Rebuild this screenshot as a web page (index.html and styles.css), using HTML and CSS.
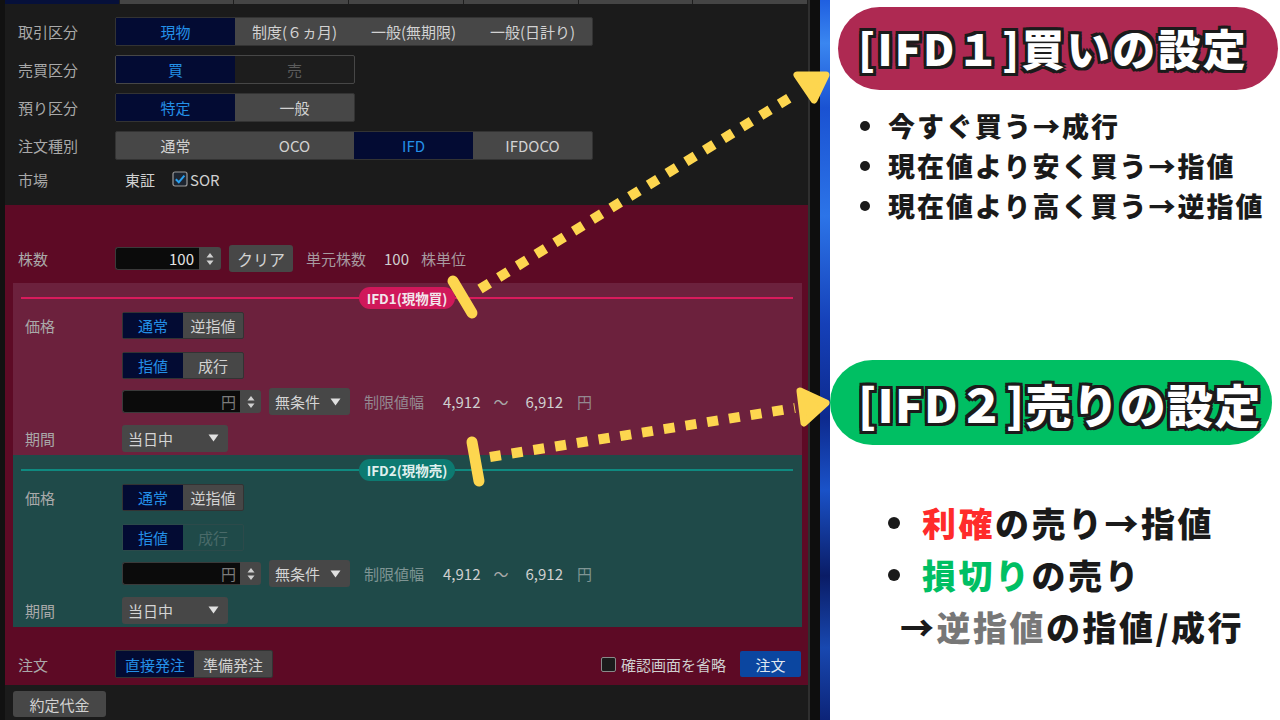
FILE: index.html
```html
<!DOCTYPE html>
<html lang="ja">
<head>
<meta charset="utf-8">
<title>IFD注文</title>
<link rel="stylesheet" href="styles.css">
</head>
<body>
<div class="screen">
  <div class="app">
    <div class="tabs">
      <span class="tab on"></span><span class="tab"></span><span class="tab"></span><span class="tab"></span><span class="tab"></span><span class="tab"></span><span class="tab"></span>
    </div>

    <div class="top">
      <div class="row">
        <span class="lbl">取引区分</span>
        <div class="seg w120">
          <span class="on">現物</span><span>制度(６ヵ月)</span><span>一般(無期限)</span><span>一般(日計り)</span>
        </div>
      </div>
      <div class="row">
        <span class="lbl">売買区分</span>
        <div class="seg w120 dark">
          <span class="on">買</span><span class="off">売</span>
        </div>
      </div>
      <div class="row">
        <span class="lbl">預り区分</span>
        <div class="seg w120">
          <span class="on">特定</span><span>一般</span>
        </div>
      </div>
      <div class="row">
        <span class="lbl">注文種別</span>
        <div class="seg w120">
          <span>通常</span><span>OCO</span><span class="on">IFD</span><span>IFDOCO</span>
        </div>
      </div>
      <div class="row short">
        <span class="lbl">市場</span>
        <span class="market">東証</span>
        <svg class="check" width="16" height="16" viewBox="0 0 16 16"><rect x="1" y="1" width="14" height="14" rx="2" fill="#1d2530" stroke="#9a9a9a" stroke-width="1.2"/><path d="M3.8 8.2 L6.8 11.2 L12.4 4.6" fill="none" stroke="#2aa0f0" stroke-width="2"/></svg>
        <span class="sor">SOR</span>
      </div>
    </div>

    <div class="order">
      <div class="row r27 pl">
        <span class="lbl">株数</span>
        <span class="num qty">100</span>
        <span class="spin"><svg width="8" height="14" viewBox="0 0 8 14"><path d="M4 1 L7.5 5.5 L0.5 5.5 Z M4 13 L7.5 8.5 L0.5 8.5 Z" fill="#d0d0d0"/></svg></span>
        <span class="btn clear">クリア</span>
        <span class="unit">単元株数</span>
        <span class="unit-n">100</span>
        <span class="unit-t">株単位</span>
      </div>

      <div class="box buy">
        <div class="head"><span class="pill">IFD1(現物買)</span></div>
        <div class="row r27">
          <span class="lbl">価格</span>
          <div class="seg w61"><span class="on">通常</span><span>逆指値</span></div>
        </div>
        <div class="row r27 g13">
          <span class="lbl"></span>
          <div class="seg w61"><span class="on">指値</span><span>成行</span></div>
        </div>
        <div class="row r27 g9">
          <span class="lbl"></span>
          <span class="num price">円</span>
          <span class="spin"><svg width="8" height="14" viewBox="0 0 8 14"><path d="M4 1 L7.5 5.5 L0.5 5.5 Z M4 13 L7.5 8.5 L0.5 8.5 Z" fill="#d0d0d0"/></svg></span>
          <span class="sel cond">無条件<svg width="11" height="8" viewBox="0 0 11 8"><path d="M0.5 0.5 L10.5 0.5 L5.5 7.5 Z" fill="#e0e0e0"/></svg></span>
          <span class="lim">制限値幅</span><span class="lim-n">4,912</span><span class="tilde">～</span><span class="lim-n2">6,912</span><span class="yen">円</span>
        </div>
        <div class="row r26 g10">
          <span class="lbl">期間</span>
          <span class="sel term">当日中<svg width="11" height="8" viewBox="0 0 11 8"><path d="M0.5 0.5 L10.5 0.5 L5.5 7.5 Z" fill="#e0e0e0"/></svg></span>
        </div>
      </div>

      <div class="box sell">
        <div class="head"><span class="pill">IFD2(現物売)</span></div>
        <div class="row r27">
          <span class="lbl">価格</span>
          <div class="seg w61"><span class="on">通常</span><span>逆指値</span></div>
        </div>
        <div class="row r27 g13">
          <span class="lbl"></span>
          <div class="seg w61 ghost"><span class="on">指値</span><span class="dis">成行</span></div>
        </div>
        <div class="row r27 g9">
          <span class="lbl"></span>
          <span class="num price">円</span>
          <span class="spin"><svg width="8" height="14" viewBox="0 0 8 14"><path d="M4 1 L7.5 5.5 L0.5 5.5 Z M4 13 L7.5 8.5 L0.5 8.5 Z" fill="#d0d0d0"/></svg></span>
          <span class="sel cond">無条件<svg width="11" height="8" viewBox="0 0 11 8"><path d="M0.5 0.5 L10.5 0.5 L5.5 7.5 Z" fill="#e0e0e0"/></svg></span>
          <span class="lim">制限値幅</span><span class="lim-n">4,912</span><span class="tilde">～</span><span class="lim-n2">6,912</span><span class="yen">円</span>
        </div>
        <div class="row r26 g10">
          <span class="lbl">期間</span>
          <span class="sel term">当日中<svg width="11" height="8" viewBox="0 0 11 8"><path d="M0.5 0.5 L10.5 0.5 L5.5 7.5 Z" fill="#e0e0e0"/></svg></span>
        </div>
      </div>

      <div class="row r28 pl submit">
        <span class="lbl">注文</span>
        <div class="seg w79"><span class="on">直接発注</span><span>準備発注</span></div>
        <span class="skip"><span class="cb"></span>確認画面を省略</span>
        <span class="go">注文</span>
      </div>
    </div>

    <div class="foot">
      <span class="btn contract">約定代金</span>
    </div>
  </div>

  <div class="edge"></div>
  <div class="wall"></div>

  <div class="notes">
    <div class="title t1">[IFD１]買いの設定</div>
    <ul class="list l1">
      <li>今すぐ買う→成行</li>
      <li>現在値より安く買う→指値</li>
      <li>現在値より高く買う→逆指値</li>
    </ul>
    <div class="title t2">[IFD２]売りの設定</div>
    <ul class="list l2">
      <li><span class="red">利確</span>の売り→指値</li>
      <li><span class="green">損切り</span>の売り</li>
      <li class="cont">→<span class="gray">逆指値</span>の指値/成行</li>
    </ul>
  </div>

  <svg class="arrows" width="1280" height="720" viewBox="0 0 1280 720">
    <g stroke="#fdd64f" fill="#fdd64f">
      <line x1="480" y1="289" x2="794" y2="95" stroke-width="10" stroke-dasharray="11 11"/>
      <line x1="453" y1="281" x2="472" y2="313" stroke-width="11" stroke-linecap="round"/>
      <polygon points="797,75 826,75 814,100" stroke-width="7" stroke-linejoin="round"/>
      <line x1="490" y1="457" x2="795" y2="408" stroke-width="10" stroke-dasharray="11 11"/>
      <line x1="472" y1="442" x2="479" y2="481" stroke-width="11" stroke-linecap="round"/>
      <polygon points="800,391 826,403 804,423" stroke-width="7" stroke-linejoin="round"/>
    </g>
  </svg>
</div>
</body>
</html>
```

FILE: styles.css
```css
* { box-sizing: border-box; margin: 0; padding: 0; }

body {
  width: 1280px;
  height: 720px;
  overflow: hidden;
  background: #ffffff;
  font-family: "Noto Sans CJK JP", "Noto Sans", sans-serif;
}

.screen {
  position: relative;
  display: flex;
  width: 1280px;
  height: 720px;
}

/* ---------- trading app ---------- */
.app {
  flex: none;
  width: 808px;
  height: 720px;
  background: #1b1b1b;
  border-left: 5px solid #111111;
  display: flex;
  flex-direction: column;
  font-size: 15px;
  color: #cfcfcf;
}

.tabs {
  display: flex;
  height: 4px;
  background: #454545;
}
.tab {
  flex: 1;
  border-right: 1px solid #1e1e1e;
}
.tab.on { background: #06103a; }

.top {
  display: flex;
  flex-direction: column;
  gap: 9px;
  padding: 13px 0 16px 13px;
}

.row {
  display: flex;
  align-items: center;
  height: 29px;
}
.row.short { height: 20px; }
.r27 { height: 27px; }
.r26 { height: 26px; }
.r28 { height: 28px; }
.g13 { margin-top: 13px; }
.g9 { margin-top: 9px; }
.g10 { margin-top: 10px; }

.lbl {
  flex: none;
  width: 97px;
  color: #a9a9a9;
}

.seg {
  display: flex;
  height: 100%;
  border: 1px solid #333333;
  border-radius: 2px;
  background: #474747;
}
.seg > span {
  display: flex;
  align-items: center;
  justify-content: center;
  color: #d2d2d2;
  white-space: nowrap;
}
.seg > span.on {
  background: #030b33;
  color: #2390e8;
}
.w120 > span { width: 119px; }
.w61 > span { width: 60px; }
.w79 > span { width: 78px; }

.seg.dark { background: #1d1d1d; border-color: #474747; }
.seg > span.off { color: #5c5c5c; }

.seg.ghost { background: transparent; border-color: #2c4a4a; }
.seg > span.dis { color: #4a6a69; }

.market { margin-left: 10px; color: #d0d0d0; }
.check { margin-left: 17px; }
.sor { margin-left: 2px; color: #d0d0d0; }

/* ---------- order area ---------- */
.order {
  background: #5d0a25;
  padding: 40px 6px 7px 8px;
  display: flex;
  flex-direction: column;
}
.pl { padding-left: 5px; }

.num {
  height: 23px;
  background: #0b0b0b;
  border: 1px solid #3a3a3a;
  border-right: none;
  border-radius: 3px 0 0 3px;
  display: flex;
  align-items: center;
  justify-content: flex-end;
  padding-right: 4px;
}
.qty { width: 84px; color: #e4e4e4; font-size: 15px; padding-right: 5px; }
.price { width: 118px; color: #7c7c7c; }

.spin {
  width: 22px;
  height: 23px;
  background: #474747;
  border-radius: 0 3px 3px 0;
  display: flex;
  align-items: center;
  justify-content: center;
}
.price + .spin { width: 21px; }

.btn {
  display: flex;
  align-items: center;
  justify-content: center;
  background: #474747;
  color: #d2d2d2;
  border-radius: 3px;
}
.clear { width: 64px; height: 27px; margin-left: 8px; font-size: 16px; }
.unit { margin-left: 13px; color: #a79aa0; }
.unit-n { margin-left: 18px; color: #cfcfcf; }
.unit-t { margin-left: 12px; color: #a79aa0; }

.box {
  display: flex;
  flex-direction: column;
  padding: 0 9px 4px 12px;
}
.box.buy { margin-top: 11px; background: #6c213d; }
.box.sell { background: #1f4a49; }

.head {
  display: flex;
  align-items: center;
  height: 29px;
  margin-left: -4px;
}
.head::before,
.head::after {
  content: "";
  flex: 1;
  height: 2px;
}
.buy .head::before, .buy .head::after { background: #d81b5c; }
.sell .head::before, .sell .head::after { background: #0f8a80; }

.pill {
  height: 22px;
  padding: 0 8px;
  border-radius: 11px;
  display: flex;
  align-items: center;
  font-size: 13.5px;
  font-weight: 700;
  color: #f2e6ec;
}
.buy .pill { background: #d0185a; }
.sell .pill { background: #0d7a71; color: #e0f0ee; }

.sel {
  height: 27px;
  background: #474747;
  border-radius: 3px;
  display: flex;
  align-items: center;
  justify-content: space-between;
  padding: 0 9px 0 6px;
  color: #d4d4d4;
  font-size: 15px;
}
.cond { width: 81px; margin-left: 8px; }
.term { width: 106px; }

.lim { margin-left: 14px; color: #948890; }
.sell .lim { color: #7f9594; }
.lim-n { margin-left: 19px; color: #cfcfcf; }
.tilde { margin-left: 13px; color: #a8a8a8; }
.lim-n2 { margin-left: 17px; color: #cfcfcf; }
.yen { margin-left: 14px; color: #948890; }
.sell .yen { color: #7f9594; }

.submit { margin-top: 23px; }
.skip {
  margin-left: auto;
  display: flex;
  align-items: center;
  color: #cfcfcf;
}
.cb {
  width: 15px;
  height: 15px;
  border: 1px solid #8a8a8a;
  border-radius: 2px;
  background: #1b1b1b;
  margin-right: 5px;
}
.go {
  width: 61px;
  height: 26px;
  margin-left: 14px;
  margin-right: 1px;
  background: #0b46a0;
  border-radius: 2px;
  color: #dfe6f0;
  display: flex;
  align-items: center;
  justify-content: center;
  font-size: 15px;
}

.foot {
  flex: 1;
  padding: 6px 0 0 8px;
}
.contract { width: 93px; height: 26px; font-size: 15px; }

/* ---------- edge + wallpaper ---------- */
.edge {
  flex: none;
  width: 12px;
  background: #0e0e0e;
  border-left: 2px solid #2f2f2f;
}
.wall {
  flex: none;
  width: 10px;
  background: linear-gradient(180deg, #1f5fe0 0%, #3a86f0 6%, #1a52d2 15%, #2c74e8 30%, #1540b8 45%, #0d2a8e 58%, #1a52c8 68%, #0a1c66 80%, #1848b0 90%, #0c2478 100%);
}

/* ---------- notes panel ---------- */
.notes {
  flex: 1;
  background: #ffffff;
  padding-top: 7px;
  font-family: "Noto Sans CJK JP", "Noto Sans", sans-serif;
  font-weight: 900;
  color: #1a1a1a;
}

.title {
  display: flex;
  align-items: center;
  color: #ffffff;
  white-space: nowrap;
  text-shadow:
    -3px -3px 0 #1b1b1b, 3px -3px 0 #1b1b1b, -3px 3px 0 #1b1b1b, 3px 3px 0 #1b1b1b,
    0 -3px 0 #1b1b1b, 0 3px 0 #1b1b1b, -3px 0 0 #1b1b1b, 3px 0 0 #1b1b1b;
}
.t1 {
  margin-left: 8px;
  width: 440px;
  height: 83px;
  border-radius: 42px;
  background: #ae2952;
  padding: 0 0 4px 20px;
  font-size: 43px;
  letter-spacing: 2.3px;
}
.t2 {
  margin-top: 134px;
  width: 442px;
  height: 85px;
  border-radius: 43px;
  background: #00bf63;
  padding-left: 28px;
  font-size: 46px;
  letter-spacing: 1.2px;
}

.list { list-style: none; }
.list li {
  display: flex;
  align-items: center;
  white-space: nowrap;
}
.list li::before {
  content: "";
  flex: none;
  border-radius: 50%;
  background: #1a1a1a;
}

.l1 { margin-top: 16px; font-size: 27px; line-height: 40px; letter-spacing: 2px; }
.l1 li::before { width: 10px; height: 10px; margin: 0 18px 0 30px; }

.l2 { margin-top: 52px; font-size: 34px; line-height: 52px; letter-spacing: 2.5px; }
.l2 li::before { width: 12px; height: 12px; margin: 0 22px 0 58px; }
.l2 li.cont { padding-left: 70px; }
.l2 li.cont::before { display: none; }

.red { color: #ff2b2b; }
.green { color: #00bf63; }
.gray { color: #777777; }

/* ---------- annotation arrows ---------- */
.arrows {
  position: absolute;
  left: 0;
  top: 0;
  pointer-events: none;
}
```
